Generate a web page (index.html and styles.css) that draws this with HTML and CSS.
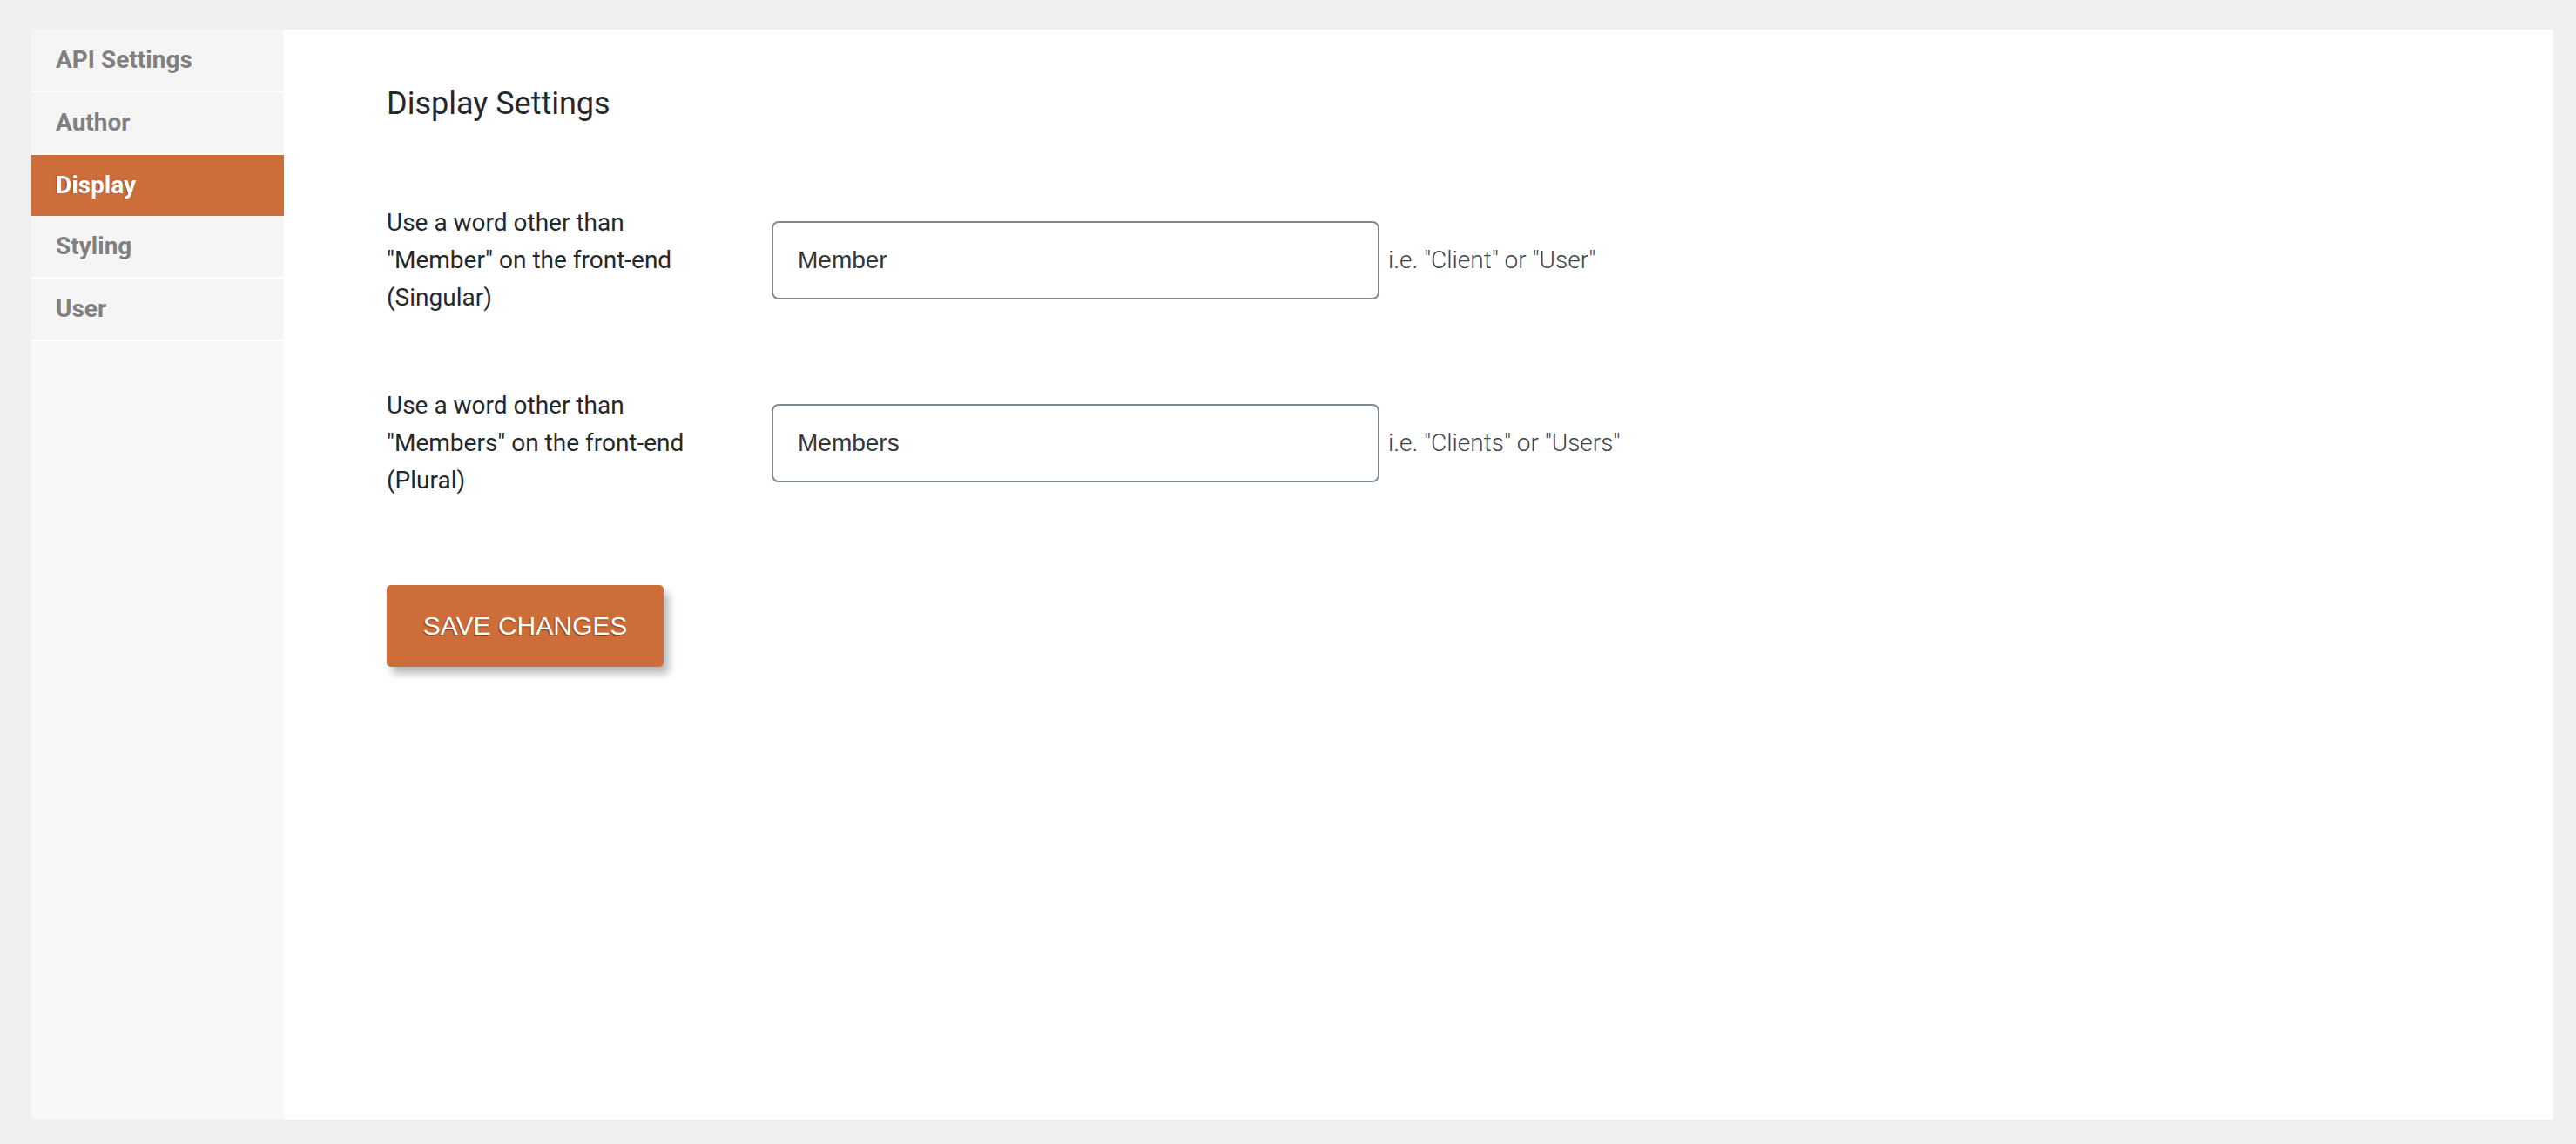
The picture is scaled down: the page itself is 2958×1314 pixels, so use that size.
FILE: index.html
```html
<!DOCTYPE html>
<html lang="en">
<head>
<meta charset="utf-8">
<title>Display Settings</title>
<link rel="stylesheet" href="styles.css">
</head>
<body>
<div class="card">
  <nav class="sidebar">
    <a class="nav-item" href="#">API Settings</a>
    <a class="nav-item" href="#">Author</a>
    <a class="nav-item active" href="#">Display</a>
    <a class="nav-item" href="#">Styling</a>
    <a class="nav-item" href="#">User</a>
  </nav>
  <main class="content">
    <h2 class="title">Display Settings</h2>
    <div class="row">
      <label class="label" for="singular">Use a word other than<br>"Member" on the front-end<br>(Singular)</label>
      <div class="field">
        <input id="singular" class="input" type="text" value="Member">
        <span class="hint">i.e. "Client" or "User"</span>
      </div>
    </div>
    <div class="row row-second">
      <label class="label" for="plural">Use a word other than<br>"Members" on the front-end<br>(Plural)</label>
      <div class="field">
        <input id="plural" class="input" type="text" value="Members">
        <span class="hint">i.e. "Clients" or "Users"</span>
      </div>
    </div>
    <button class="save" type="button">SAVE CHANGES</button>
  </main>
</div>
</body>
</html>
```

FILE: styles.css
```css
html, body {
  margin: 0;
  padding: 0;
}

body {
  background: #f0f0f0;
  padding: 34px 26px 28px 36px;
  font-family: Roboto, "Liberation Sans", sans-serif;
}

.card {
  display: flex;
  height: 1252px;
  background: #ffffff;
}

.sidebar {
  width: 290px;
  flex: 0 0 290px;
  background: #f8f8f8;
  display: flex;
  flex-direction: column;
}

.nav-item {
  display: block;
  height: 70px;
  line-height: 70px;
  padding: 0 28px;
  background: #f5f5f5;
  border-bottom: 2px solid #ffffff;
  color: #808080;
  font-family: Roboto, sans-serif;
  font-weight: 700;
  font-size: 28px;
  text-decoration: none;
  text-shadow: 1px 1px 1px #ffffff;
}

.nav-item.active {
  background: #cc6d3a;
  border-bottom: none;
  color: #ffffff;
  text-shadow: -1px 0 1px rgba(60, 20, 0, 0.55);
}

.content {
  flex: 1;
  padding: 64px 0 0 118px;
}

.title {
  margin: 0;
  font-family: Roboto, sans-serif;
  font-weight: 400;
  font-size: 36px;
  line-height: 42px;
  color: #23282d;
}

.row {
  display: flex;
  align-items: center;
  margin-top: 94px;
}

.row-second {
  margin-top: 81px;
}

.label {
  width: 442px;
  flex: 0 0 442px;
  font-family: Roboto, sans-serif;
  font-size: 28px;
  line-height: 43px;
  color: #23282d;
}

.field {
  display: flex;
  align-items: baseline;
}

.input {
  box-sizing: border-box;
  width: 698px;
  height: 90px;
  margin: 0;
  padding: 0 28px;
  border: 2px solid #7e8993;
  border-radius: 8px;
  background: #ffffff;
  font-family: "Liberation Sans", Arial, sans-serif;
  font-size: 28px;
  color: #32373c;
  outline: none;
}

.hint {
  margin-left: 10px;
  font-family: Roboto, sans-serif;
  font-weight: 300;
  font-size: 28px;
  color: #3c434a;
}

.save {
  display: block;
  margin-top: 99px;
  width: 318px;
  height: 94px;
  padding: 0;
  border: none;
  border-radius: 5px;
  background: #cc6d3a;
  color: #ffffff;
  font-family: "Liberation Sans", Arial, sans-serif;
  font-size: 30px;
  text-shadow: -1px 1px 1px rgba(90, 35, 0, 0.6);
  box-shadow: 6px 8px 10px rgba(0, 0, 0, 0.28);
  cursor: pointer;
}
```
